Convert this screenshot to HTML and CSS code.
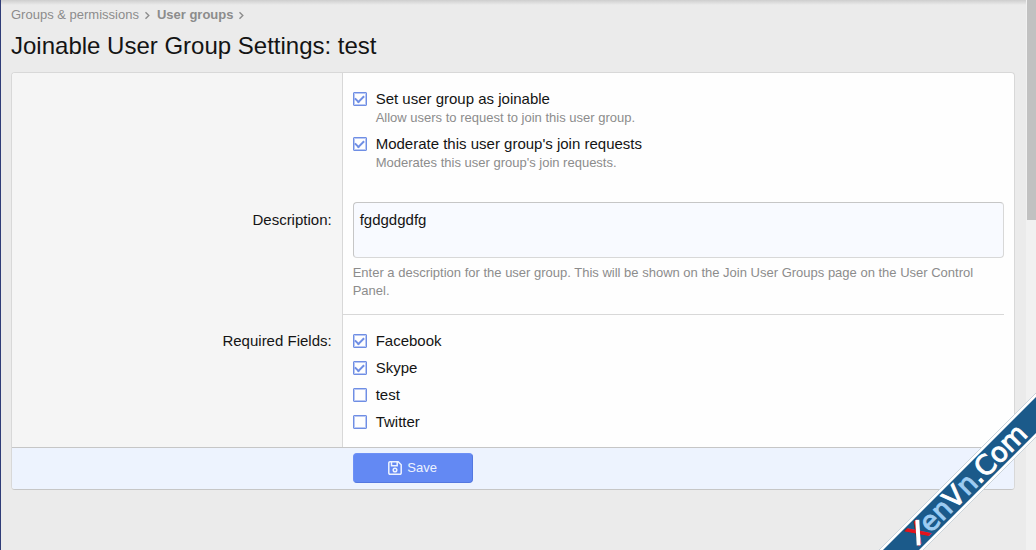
FILE: index.html
```html
<!DOCTYPE html>
<html lang="en">
<head>
<meta charset="utf-8">
<title>Joinable User Group Settings: test</title>
<link rel="stylesheet" href="styles.css">
</head>
<body>
<main class="page">
  <nav class="crumbs" aria-label="Breadcrumb">
    <a href="#">Groups &amp; permissions</a>
    <svg class="chevron" viewBox="0 0 5 9"><path d="M.5 1.2l3.3 3.3-3.3 3.3"/></svg>
    <a href="#" class="current">User groups</a>
    <svg class="chevron" viewBox="0 0 5 9"><path d="M.5 1.2l3.3 3.3-3.3 3.3"/></svg>
  </nav>
  <h1 class="title">Joinable User Group Settings: test</h1>
  <form class="block">
    <div class="row">
      <div class="label"></div>
      <div class="field">
        <div class="choice">
          <input type="checkbox" id="joinable" checked>
          <label for="joinable">Set user group as joinable</label>
          <p class="hint">Allow users to request to join this user group.</p>
        </div>
        <div class="choice">
          <input type="checkbox" id="moderate" checked>
          <label for="moderate">Moderate this user group's join requests</label>
          <p class="hint">Moderates this user group's join requests.</p>
        </div>
      </div>
    </div>
    <div class="row">
      <div class="label boxed"><label for="description">Description:</label></div>
      <div class="field ruled">
        <textarea id="description" rows="2">fgdgdgdfg</textarea>
        <p class="hint">Enter a description for the user group. This will be shown on the Join User Groups page on the User Control Panel.</p>
      </div>
    </div>
    <div class="row" role="group" aria-labelledby="required">
      <div class="label"><span id="required">Required Fields:</span></div>
      <div class="field">
        <div class="choice"><input type="checkbox" id="facebook" checked><label for="facebook">Facebook</label></div>
        <div class="choice"><input type="checkbox" id="skype" checked><label for="skype">Skype</label></div>
        <div class="choice"><input type="checkbox" id="test"><label for="test">test</label></div>
        <div class="choice"><input type="checkbox" id="twitter"><label for="twitter">Twitter</label></div>
      </div>
    </div>
    <div class="row submit">
      <div class="actions">
        <button type="button" class="save">
          <svg viewBox="0 0 14 14"><path d="M2 .8h8.2l3 3V12a1.2 1.2 0 0 1-1.2 1.2H2A1.2 1.2 0 0 1 .8 12V2A1.2 1.2 0 0 1 2 .8z"/><path d="M3.5 1v3.7h5.7V1"/><circle cx="7" cy="9" r="1.8"/></svg>
          Save
        </button>
      </div>
    </div>
  </form>
</main>
<div class="scrollbar"><div class="thumb"></div></div>
<svg class="ribbon" viewBox="0 0 160 160" role="img" aria-label="XenVn.Com">
  <path class="ribbon-edge" d="M2 161L161 2V46L46 161z"/>
  <path class="ribbon-band" d="M6 161L161 6V42L42 161z"/>
  <g transform="translate(42 156) rotate(-45)">
    <text class="ribbon-text" x="0" y="0"><tspan class="red">X</tspan><tspan class="pale">en</tspan>V<tspan class="pale">n</tspan>.Com</text>
    <path class="slash" d="M1 0L18 -19"/>
  </g>
</svg>
</body>
</html>
```
FILE: styles.css
```css
* { box-sizing: border-box; }

body {
  margin: 0;
  min-height: 100vh;
  display: flex;
  position: relative;
  overflow: hidden;
  border-left: 1px solid #303d78;
  background: #ebebeb;
  color: #141414;
  font: 15px/21px "Liberation Sans", Arial, sans-serif;
}

p, h1 { margin: 0; }

.page {
  flex: 1;
  min-width: 0;
  padding: 6px 11px 0 10px;
  background: linear-gradient(#cecece, #ebebeb 5px);
}

.crumbs {
  display: flex;
  align-items: center;
  gap: 6px;
  font-size: 13px;
  line-height: 18px;
}
.crumbs a { color: #8c8c8c; text-decoration: none; }
.crumbs .current { font-weight: 700; }
.chevron {
  width: 5px;
  height: 9px;
  margin-right: 1px;
  fill: none;
  stroke: #8c8c8c;
  stroke-width: 1.4;
}

.title {
  margin: 5px 0 9px;
  font-size: 24px;
  line-height: 34px;
  font-weight: 400;
}

.block {
  border: 1px solid #d8d8d8;
  border-bottom-color: #c6c6c6;
  border-radius: 4px;
  background: #fefefe;
  overflow: hidden;
}

.row { display: grid; grid-template-columns: 33% 67%; }
.label {
  padding: 15px 10px 15px 15px;
  border-right: 1px solid #d8d8d8;
  background: #f5f5f5;
  text-align: right;
}
.boxed { padding-top: 22px; }
.field { padding: 15px 10px; }
.ruled { position: relative; }
.ruled::after {
  content: "";
  position: absolute;
  left: 0;
  right: 10px;
  bottom: 0;
  border-bottom: 1px solid #d8d8d8;
}

.choice {
  display: grid;
  grid-template-columns: 14px 1fr;
  column-gap: 9px;
  align-items: center;
}
.choice + .choice { margin-top: 6px; }
.choice .hint { grid-column: 2; }
.hint { color: #8c8c8c; font-size: 13px; line-height: 18px; }

input[type="checkbox"] {
  appearance: none;
  width: 14px;
  height: 14px;
  margin: 0;
  border: 1px solid #6f8ee4;
  border-radius: 1px;
  outline: 1px solid #b9c8f3;
  outline-offset: -2px;
  display: grid;
  place-items: center;
}
input[type="checkbox"]:checked::before {
  content: "";
  width: 7px;
  height: 4px;
  margin-bottom: 2px;
  border: solid #6f8ee4;
  border-width: 0 0 2px 2px;
  transform: rotate(-45deg);
}

textarea {
  display: block;
  width: 100%;
  height: 56px;
  margin-bottom: 6px;
  padding: 6px;
  border: 1px solid #d8d8d8;
  border-color: #c6c6c6 #d8d8d8 #d8d8d8 #c6c6c6;
  border-radius: 4px;
  background: #f8faff;
  color: #141414;
  font: inherit;
  resize: none;
}

.submit { border-top: 1px solid #c6c6c6; background: #edf3fe; }
.actions { grid-column: 2; padding: 5px 10px 6px; }
.save {
  display: flex;
  align-items: center;
  justify-content: center;
  gap: 5px;
  min-width: 120px;
  height: 30px;
  padding: 0 6px 1px;
  border: 1px solid;
  border-color: #6d90f6 #5478e0 #5478e0 #6d90f6;
  border-radius: 4px;
  background: #6389f3;
  color: #edf3fe;
  font: inherit;
  font-size: 13px;
}
.save svg {
  width: 14px;
  height: 14px;
  fill: none;
  stroke: currentColor;
  stroke-width: 1.5;
}

.scrollbar {
  width: 10px;
  padding-left: 1px;
  background: #f1f1f1;
}
.thumb { height: 40vh; background: #c1c1c1; }

.ribbon {
  position: absolute;
  right: 0;
  bottom: 0;
  width: 160px;
  height: 160px;
}
.ribbon-edge { fill: #fff; stroke: #c9d3da; stroke-width: 1; }
.ribbon-band { fill: #1b5a8a; }
.ribbon-text {
  fill: #fff;
  stroke: #fff;
  stroke-width: 1;
  font: 400 27px "DejaVu Sans", sans-serif;
}
.ribbon-text .red { fill: #e3131d; stroke: #e3131d; }
.ribbon-text .pale { fill: #9dccf2; stroke: #9dccf2; }
.slash { stroke: #fff; stroke-width: 4; }
```
